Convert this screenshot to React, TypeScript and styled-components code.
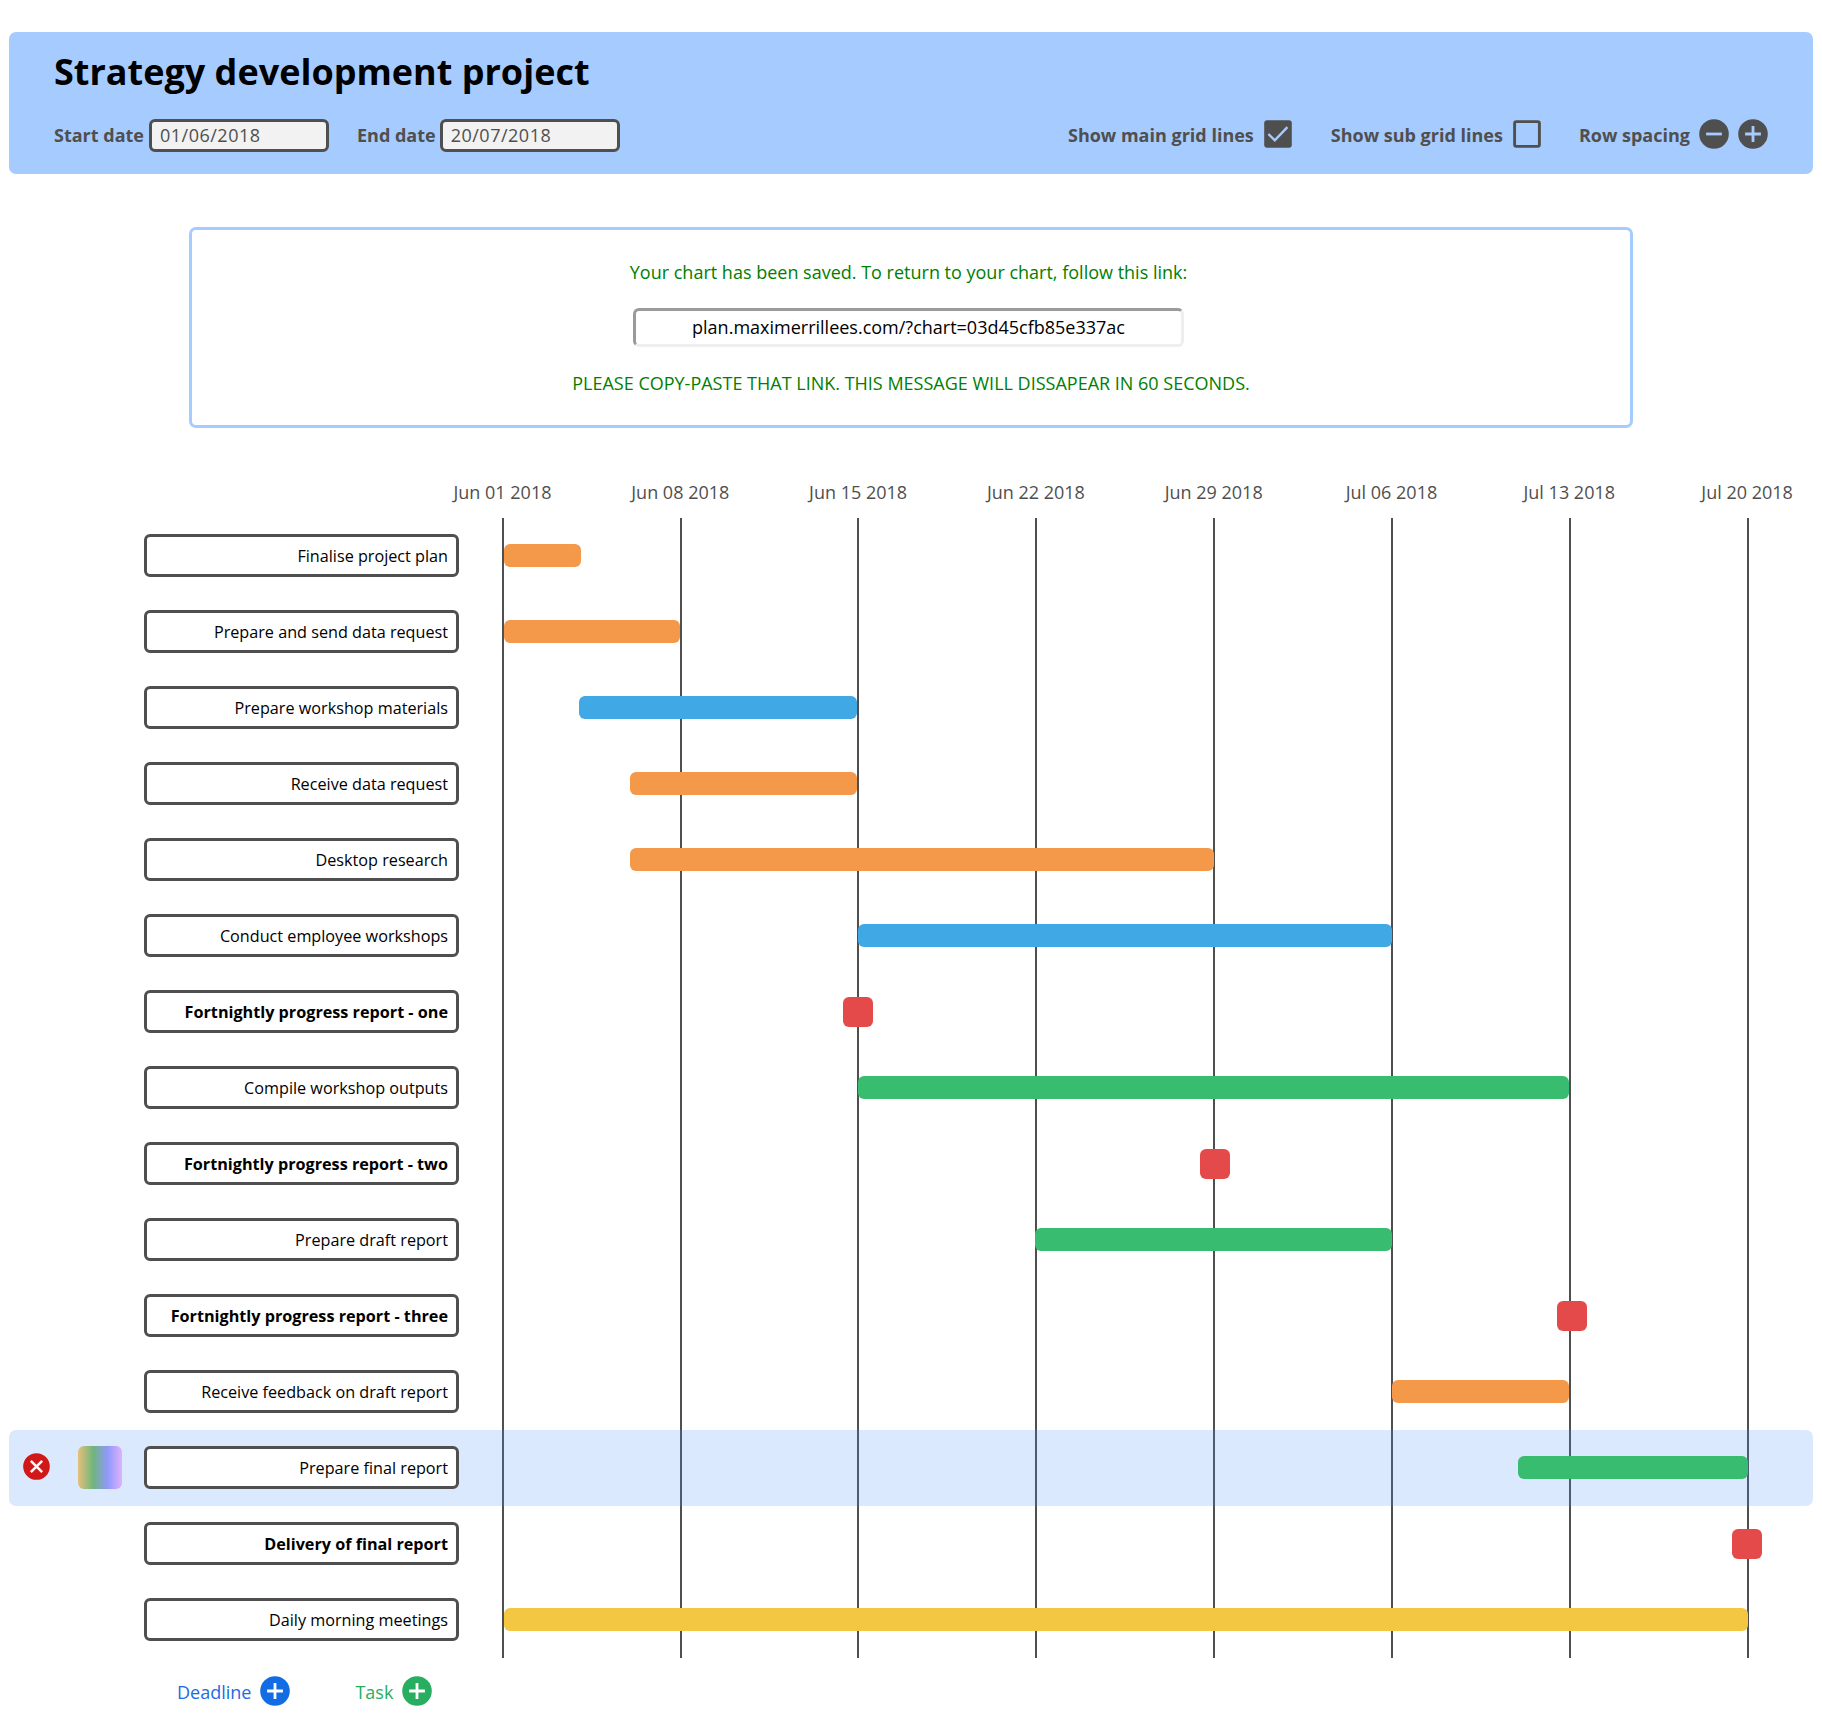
import React from 'react';
import styled, { createGlobalStyle } from 'styled-components';

const ink = '#4f4f4f';

const GlobalStyle = createGlobalStyle`
  * { box-sizing: border-box; }
  body { margin: 0; background: #fff; font-family: 'Open Sans', 'Noto Sans', sans-serif; }
  p, h1 { margin: 0; }
  input { font-family: inherit; }
`;

const Page = styled.div`
  width: 1822px;
  height: 1732px;
  padding: 32px 9px 0;
  overflow: hidden;
`;

const Header = styled.header`
  height: 142px;
  padding: 14px 45px 0;
  border-radius: 7px;
  background: #a6cbff;
`;

const Title = styled.h1`
  font-size: 36px;
  line-height: 52px;
  font-weight: 700;
  color: #000;
`;

const Toolbar = styled.div`
  display: flex;
  align-items: center;
  height: 33px;
  margin-top: 20px;
  color: ${ink};
  font-size: 18px;
  font-weight: 700;
`;

const Field = styled.label<{ $gap: number }>`
  display: flex;
  align-items: center;
  gap: ${(p) => p.$gap}px;
  margin-right: 28px;
`;

const DateInput = styled.input`
  width: 180px;
  height: 33px;
  margin-top: 2px;
  padding: 0 8px 2px;
  border: 3px solid ${ink};
  border-radius: 6px;
  background: #f2f2f2;
  color: ${ink};
  font-size: 18px;
  letter-spacing: 0.5px;
`;

const Spacer = styled.div`
  flex: 1;
`;

const Option = styled.div<{ $before: number; $gap: number }>`
  display: flex;
  align-items: center;
  gap: ${(p) => p.$gap}px;
  margin-left: ${(p) => p.$before}px;
`;

const Icons = styled.div`
  display: flex;
  gap: 9px;
`;

const Icon = styled.svg`
  display: block;
  flex: none;
  margin-bottom: 2px;
`;

const Notice = styled.section`
  display: flex;
  flex-direction: column;
  align-items: center;
  width: 80%;
  height: 201px;
  margin: 53px auto 0;
  padding-top: 26px;
  border: 3px solid #a6cbff;
  border-radius: 7px;
  color: green;
  font-size: 18px;
`;

const Message = styled.p<{ $shift?: number }>`
  line-height: 32px;
  margin-right: ${(p) => p.$shift ?? 0}px;
`;

const LinkInput = styled.input`
  width: 551px;
  height: 39px;
  margin: 20px 5px 20px 0;
  padding: 0 2px 2px;
  border: 3px solid;
  border-color: #9a9a9a #eee #eee #9a9a9a;
  border-radius: 6px;
  background: #fff;
  color: #000;
  font-size: 18px;
  text-align: center;
`;

const Dates = styled.div`
  display: grid;
  grid-template-columns: repeat(8, 177.8px);
  margin: 48px 0 0 404.6px;
  height: 42px;
  line-height: 32px;
  color: ${ink};
  font-size: 18px;
  text-align: center;
`;

const Chart = styled.main`
  position: relative;
`;

const GridLine = styled.div`
  position: absolute;
  top: 0;
  bottom: 0;
  width: 2px;
  background: ${ink};
`;

const Row = styled.div<{ $active?: boolean }>`
  position: relative;
  display: flex;
  align-items: center;
  height: 76px;
  padding-bottom: 1px;
  border-radius: 7px;
  background: ${(p) => (p.$active ? 'rgba(75, 145, 255, 0.2)' : 'transparent')};
`;

const Tools = styled.div`
  display: flex;
  align-items: center;
  gap: 28.5px;
  width: 135px;
  padding-left: 13.5px;
`;

const Swatch = styled.div`
  width: 44px;
  height: 43px;
  border-radius: 6px;
  background: linear-gradient(90deg, #e6c07a 0%, #6fb57d 35%, #8f98fc 67%, #deb2fb 100%);
`;

const NameInput = styled.input<{ $bold: boolean }>`
  width: 315px;
  height: 43px;
  padding: 0 8px;
  border: 3px solid ${ink};
  border-radius: 6px;
  background: #fff;
  color: #000;
  font-size: 16.2px;
  font-weight: ${(p) => (p.$bold ? 700 : 400)};
  text-align: right;
`;

const Track = styled.div`
  display: flex;
  flex: 1;
  margin-left: 45px;
`;

const Bar = styled.div<{ $color: string; $deadline: boolean }>`
  flex: none;
  height: ${(p) => (p.$deadline ? 30 : 23)}px;
  margin-top: ${(p) => (p.$deadline ? 1 : 0)}px;
  border-radius: 6px;
  background: ${(p) => p.$color};
`;

const Footer = styled.footer`
  display: flex;
  align-items: center;
  gap: 65px;
  margin: 17px 0 0 168px;
  height: 34px;
  font-size: 18px;
`;

const AddAction = styled.div<{ $color: string }>`
  display: flex;
  align-items: center;
  gap: 9px;
  color: ${(p) => p.$color};
`;

const CircleIcon = ({ size, color, stroke = '#fff', d }: { size: number; color: string; stroke?: string; d: string }) => (
  <Icon width={size} height={size} viewBox="0 0 30 30">
    <circle cx="15" cy="15" r="14.8" fill={color} />
    <path d={d} stroke={stroke} strokeWidth="2.8" fill="none" />
  </Icon>
);

const PLUS = 'M15 7.1v15.8M7.1 15h15.8';
const MINUS = 'M7.1 15h15.8';
const CROSS = 'M8.7 8.7l12.6 12.6M21.3 8.7L8.7 21.3';

const orange = '#f4994a';
const blue = '#40a8e5';
const green = '#38bc70';
const red = '#e54a4b';
const yellow = '#f3c742';

const weeks = ['Jun 01 2018', 'Jun 08 2018', 'Jun 15 2018', 'Jun 22 2018', 'Jun 29 2018', 'Jul 06 2018', 'Jul 13 2018', 'Jul 20 2018'];

type Item = { name: string; start: number; width: number; color: string; deadline?: boolean; active?: boolean };

const items: Item[] = [
  { name: 'Finalise project plan', start: 0, width: 77, color: orange },
  { name: 'Prepare and send data request', start: 0, width: 176, color: orange },
  { name: 'Prepare workshop materials', start: 75, width: 278, color: blue },
  { name: 'Receive data request', start: 126, width: 227, color: orange },
  { name: 'Desktop research', start: 126, width: 584, color: orange },
  { name: 'Conduct employee workshops', start: 354, width: 534, color: blue },
  { name: 'Fortnightly progress report - one', start: 339, width: 30, color: red, deadline: true },
  { name: 'Compile workshop outputs', start: 354, width: 711, color: green },
  { name: 'Fortnightly progress report - two', start: 696, width: 30, color: red, deadline: true },
  { name: 'Prepare draft report', start: 531, width: 357, color: green },
  { name: 'Fortnightly progress report - three', start: 1053, width: 30, color: red, deadline: true },
  { name: 'Receive feedback on draft report', start: 888, width: 177, color: orange },
  { name: 'Prepare final report', start: 1014, width: 230, color: green, active: true },
  { name: 'Delivery of final report', start: 1228.4, width: 30, color: red, deadline: true },
  { name: 'Daily morning meetings', start: 0, width: 1244, color: yellow },
];

export default function App() {
  return (
    <Page>
      <GlobalStyle />
      <Header>
        <Title>Strategy development project</Title>
        <Toolbar>
          <Field $gap={5}>Start date<DateInput defaultValue="01/06/2018" /></Field>
          <Field $gap={4}>End date<DateInput defaultValue="20/07/2018" /></Field>
          <Spacer />
          <Option $before={0} $gap={10}>
            Show main grid lines
            <Icon width="28" height="28" viewBox="0 0 28 28">
              <rect x="0.2" y="0.2" width="27.6" height="27.6" rx="3" fill={ink} />
              <path d="M4.4 14l6.4 6.4L23.4 7.2" stroke="#a6cbff" strokeWidth="2.4" fill="none" />
            </Icon>
          </Option>
          <Option $before={39} $gap={10}>
            Show sub grid lines
            <Icon width="28" height="28" viewBox="0 0 28 28">
              <rect x="1.6" y="1.6" width="24.8" height="24.8" rx="1.8" stroke={ink} strokeWidth="2.9" fill="none" />
            </Icon>
          </Option>
          <Option $before={38} $gap={9}>
            Row spacing
            <Icons>
              <CircleIcon size={30} color={ink} stroke="#a6cbff" d={MINUS} />
              <CircleIcon size={30} color={ink} stroke="#a6cbff" d={PLUS} />
            </Icons>
          </Option>
        </Toolbar>
      </Header>
      <Notice>
        <Message $shift={5}>Your chart has been saved. To return to your chart, follow this link:</Message>
        <LinkInput defaultValue="plan.maximerrillees.com/?chart=03d45cfb85e337ac" />
        <Message>PLEASE COPY-PASTE THAT LINK. THIS MESSAGE WILL DISSAPEAR IN 60 SECONDS.</Message>
      </Notice>
      <Dates>{weeks.map((w) => <span key={w}>{w}</span>)}</Dates>
      <Chart>
        {weeks.map((w, i) => <GridLine key={w} style={{ left: Math.round(492.7 + i * 177.86) }} />)}
        {items.map((item) => (
          <Row key={item.name} $active={item.active}>
            <Tools>
              {item.active && (
                <>
                  <CircleIcon size={27} color="#d01818" d={CROSS} />
                  <Swatch />
                </>
              )}
            </Tools>
            <NameInput $bold={!!item.deadline} defaultValue={item.name} />
            <Track>
              <Bar $color={item.color} $deadline={!!item.deadline} style={{ marginLeft: item.start, width: item.width }} />
            </Track>
          </Row>
        ))}
      </Chart>
      <Footer>
        <AddAction $color="#1c6ae4">Deadline<CircleIcon size={30} color="#126ce4" d={PLUS} /></AddAction>
        <AddAction $color="#27ae60">Task<CircleIcon size={30} color="#27ae60" d={PLUS} /></AddAction>
      </Footer>
    </Page>
  );
}
